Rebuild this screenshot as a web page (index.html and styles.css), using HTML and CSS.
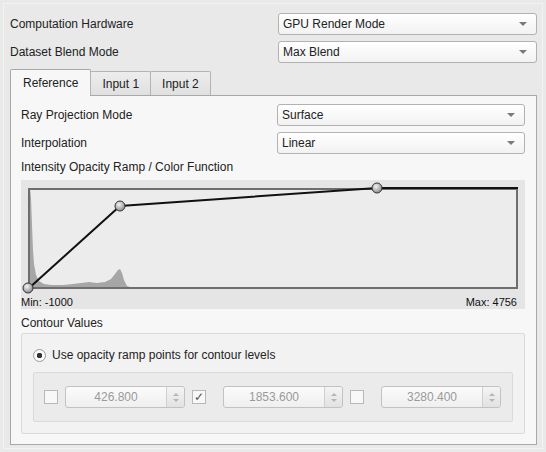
FILE: index.html
```html
<!DOCTYPE html>
<html>
<head>
<meta charset="utf-8">
<link rel="stylesheet" href="styles.css">
</head>
<body>
<div class="window">
  <div class="row top-row">
    <span class="label">Computation Hardware</span>
    <div class="select wide"><span>GPU Render Mode</span><i class="caret"></i></div>
  </div>
  <div class="row top-row">
    <span class="label">Dataset Blend Mode</span>
    <div class="select wide"><span>Max Blend</span><i class="caret"></i></div>
  </div>
  <div class="tabs">
    <div class="tab active">Reference</div>
    <div class="tab">Input 1</div>
    <div class="tab">Input 2</div>
  </div>
  <div class="panel">
    <div class="row">
      <span class="label">Ray Projection Mode</span>
      <div class="select"><span>Surface</span><i class="caret"></i></div>
    </div>
    <div class="row">
      <span class="label">Interpolation</span>
      <div class="select"><span>Linear</span><i class="caret"></i></div>
    </div>
    <div class="section-title">Intensity Opacity Ramp / Color Function</div>
    <div class="chart">
      <svg class="plot" width="504" height="114" viewBox="0 0 504 114">
        <rect x="7" y="8" width="490" height="101" fill="#ececec"/>
        <path d="M8 109 L8 9 L9 8 L10 18 L11 45 L12 70 L13 84 L15 95 L18 101 L23 104 L30 105 L42 105 L52 104 L60 103 L68 102 L76 103 L84 102 L90 99 L94 94 L97 90 L99 89 L101 93 L103 100 L106 106 L112 108 L340 108 L345 107 L380 107 L385 108 L395 108 L398 107 L420 107 L425 108 L440 108 L445 107 L470 107 L472 108 L497 108 L497 109 Z" fill="#a6a6a6"/>
        <rect x="8" y="9" width="488" height="99" fill="none" stroke="#6e6e6e" stroke-width="2"/>
        <polyline points="7,109 99,26 356,8 497,8" fill="none" stroke="#111" stroke-width="2"/>
        <defs>
          <radialGradient id="knob" cx="40%" cy="35%" r="65%">
            <stop offset="0" stop-color="#f4f4f4"/>
            <stop offset="1" stop-color="#8c8c8c"/>
          </radialGradient>
        </defs>
        <circle cx="7" cy="108" r="5" fill="url(#knob)" stroke="#333" stroke-width="1"/>
        <circle cx="99" cy="26" r="5" fill="url(#knob)" stroke="#333" stroke-width="1"/>
        <circle cx="356" cy="8" r="5" fill="url(#knob)" stroke="#333" stroke-width="1"/>
      </svg>
      <div class="range"><span>Min: -1000</span><span>Max: 4756</span></div>
    </div>
    <div class="section-title contour-title">Contour Values</div>
    <div class="group">
      <div class="radio-row"><span class="radio"></span><span>Use opacity ramp points for contour levels</span></div>
      <div class="levels">
        <span class="check"></span>
        <div class="spin"><span class="val">426.800</span><span class="arrows"><i class="up"></i><i class="down"></i></span></div>
        <span class="check checked">&#10003;</span>
        <div class="spin"><span class="val">1853.600</span><span class="arrows"><i class="up"></i><i class="down"></i></span></div>
        <span class="check"></span>
        <div class="spin"><span class="val">3280.400</span><span class="arrows"><i class="up"></i><i class="down"></i></span></div>
      </div>
    </div>
  </div>
</div>
</body>
</html>
```
FILE: styles.css
```css
* { box-sizing: border-box; }
html, body {
  margin: 0;
  padding: 0;
  background: #e9e9e9;
  font-family: "Liberation Sans", Arial, sans-serif;
  font-size: 12px;
  color: #222;
}
.window {
  width: 546px;
  height: 452px;
  padding: 13px 9px 0 10px;
  position: relative;
}
.window::before {
  content: "";
  position: absolute;
  left: 3px; top: 3px; right: 3px; bottom: 3px;
  border: 1px solid #f3f3f3;
  pointer-events: none;
}
.row {
  display: flex;
  align-items: center;
  justify-content: space-between;
  height: 22px;
  margin-bottom: 6px;
}
.select {
  width: 248px;
  height: 22px;
  border: 1px solid #b2b2b2;
  border-radius: 3px;
  background: linear-gradient(#ffffff, #f2f2f2);
  display: flex;
  align-items: center;
  justify-content: space-between;
  padding: 0 9px 0 4px;
  color: #222;
}
.select.wide { width: 259px; }
.caret {
  width: 0; height: 0;
  border-left: 4px solid transparent;
  border-right: 4px solid transparent;
  border-top: 4px solid #7a7a7a;
}
.tabs {
  display: flex;
  align-items: flex-end;
  height: 26px;
  position: relative;
  z-index: 1;
}
.tab {
  height: 24px;
  padding: 0 11px;
  display: flex;
  align-items: center;
  border: 1px solid #b4b4b4;
  border-bottom: none;
  background: linear-gradient(#ededed, #e0e0e0);
  margin-right: -1px;
  border-radius: 2px 2px 0 0;
}
.tab.active {
  height: 27px;
  padding: 0 12px;
  background: #f7f7f7;
  border-color: #a8a8a8;
  margin-bottom: -1px;
}
.panel {
  height: 350px;
  border: 1px solid #a8a8a8;
  background: #f7f7f7;
  padding: 8px 11px 0 10px;
}
.section-title {
  height: 14px;
  line-height: 14px;
  margin: 0 0 6px 0;
}
.chart {
  width: 504px;
  height: 129px;
  background: #e5e5e5;
}
.plot { display: block; }
.range {
  display: flex;
  justify-content: space-between;
  padding: 2px 8px 0 0;
  height: 15px;
  line-height: 13px;
  font-size: 11px;
  color: #111;
}
.contour-title { margin-top: 7px; margin-bottom: 3px; }
.group {
  width: 504px;
  height: 101px;
  border: 1px solid #dadada;
  border-radius: 2px;
  background: #f2f2f2;
  padding: 13px 11px 0 11px;
}
.radio-row {
  display: flex;
  align-items: center;
  gap: 6px;
  height: 16px;
  margin-bottom: 9px;
}
.radio {
  width: 13px; height: 13px;
  border-radius: 50%;
  border: 1px solid #9a9a9a;
  background: radial-gradient(circle, #333 0 2.5px, #fafafa 3px);
}
.levels {
  height: 50px;
  border: 1px solid #dadada;
  border-radius: 2px;
  background: #ebebeb;
  display: flex;
  align-items: center;
  padding: 0 0 0 10px;
}
.check {
  width: 14px; height: 14px;
  border: 1px solid #b8b8b8;
  background: #f8f8f8;
  display: flex;
  align-items: center;
  justify-content: center;
  font-size: 12px;
  color: #555;
  flex: none;
}
.spin {
  width: 120px;
  height: 22px;
  border: 1px solid #c2c2c2;
  border-radius: 3px;
  background: linear-gradient(#fbfbfb, #efefef);
  display: flex;
  margin: 0 7px 0 7px;
  flex: none;
}
.levels .spin:nth-of-type(2), .levels .spin:nth-of-type(3) { margin-left: 17px; }
.val {
  flex: 1;
  text-align: center;
  line-height: 20px;
  color: #9a9a9a;
}
.arrows {
  width: 18px;
  border-left: 1px solid #cfcfcf;
  background: linear-gradient(#f4f4f4, #e2e2e2);
  display: flex;
  flex-direction: column;
  align-items: center;
  justify-content: center;
  gap: 3px;
  border-radius: 0 3px 3px 0;
}
.up {
  width: 0; height: 0;
  border-left: 3px solid transparent;
  border-right: 3px solid transparent;
  border-bottom: 3px solid #b5b5b5;
}
.down {
  width: 0; height: 0;
  border-left: 3px solid transparent;
  border-right: 3px solid transparent;
  border-top: 3px solid #b5b5b5;
}
```
